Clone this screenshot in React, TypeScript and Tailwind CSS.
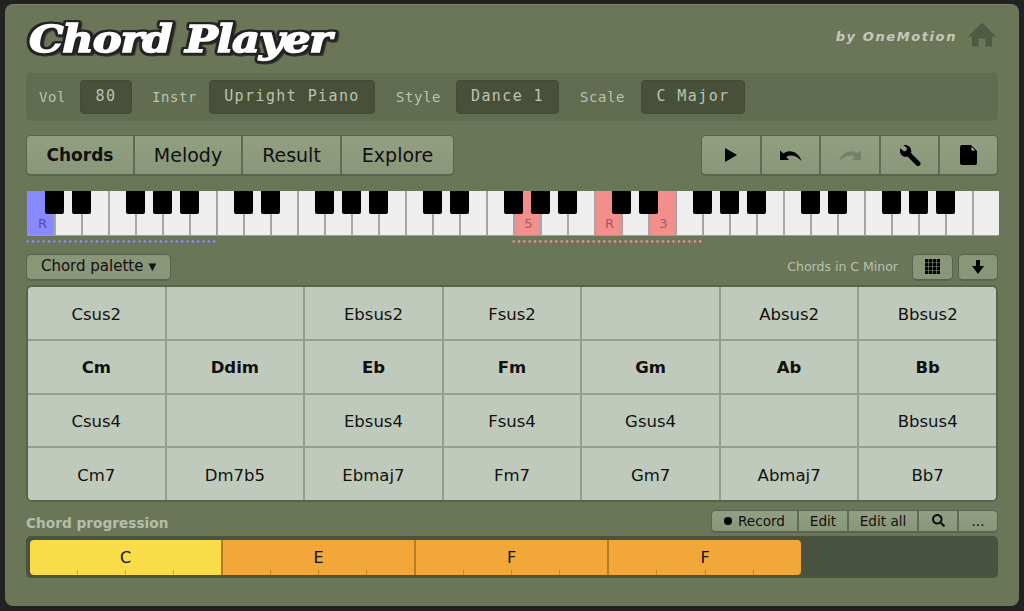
import { FaSearch } from 'react-icons/fa';

const WHITE_COUNT = 36;
const KEY_W = 27;
const BLACK_OFFSETS = [0, 1, 3, 4, 5];

const blackKeys: number[] = [];
for (let oct = 0; oct < 5; oct++) {
  BLACK_OFFSETS.forEach((n) => blackKeys.push(oct * 7 + n));
}

const marks: Record<number, { label: string; color: string; text: string }> = {
  0: { label: 'R', color: 'bg-[#8888ff]', text: 'text-[#4f4fa8]' },
  18: { label: '5', color: 'bg-[#f28e8c]', text: 'text-[#a85a5a]' },
  21: { label: 'R', color: 'bg-[#f28e8c]', text: 'text-[#a85a5a]' },
  23: { label: '3', color: 'bg-[#f28e8c]', text: 'text-[#a85a5a]' },
};

const chordRows = [
  ['Csus2', '', 'Ebsus2', 'Fsus2', '', 'Absus2', 'Bbsus2'],
  ['Cm', 'Ddim', 'Eb', 'Fm', 'Gm', 'Ab', 'Bb'],
  ['Csus4', '', 'Ebsus4', 'Fsus4', 'Gsus4', '', 'Bbsus4'],
  ['Cm7', 'Dm7b5', 'Ebmaj7', 'Fm7', 'Gm7', 'Abmaj7', 'Bb7'],
];

const btn = 'flex items-center justify-center bg-gradient-to-b from-[#939f82] to-[#8a9678] border-r-[2px] border-[#616c55] last:border-r-0';
const label = 'text-[#bcc3ae] text-[14px] tracking-[0.6px]';
const small = 'h-[27px] rounded-[5px] bg-[#8a9678] border border-[#59644e] border-b-[2px] flex items-center justify-center';

function Field({ width, children }: { width: string; children: string }) {
  return (
    <div className={`${width} h-[34px] rounded-[4px] bg-[#495039] border border-[#434a36] flex items-center justify-center text-[#bcc3ae] text-[15px] tracking-[1.4px] pb-[2px]`}>
      {children}
    </div>
  );
}

function Ticks() {
  return (
    <div className="absolute left-0 right-0 bottom-0 h-[5px] flex justify-evenly">
      <span className="w-px h-full bg-black/20" />
      <span className="w-px h-full bg-black/20" />
      <span className="w-px h-full bg-black/20" />
    </div>
  );
}

function GridIcon() {
  return (
    <svg width="15" height="15" viewBox="0 0 15 15" fill="#000">
      {[0, 1, 2, 3].map((r) =>
        [0, 1, 2, 3].map((c) => <rect key={`${r}-${c}`} x={c * 4} y={r * 4} width="3.4" height="3.4" rx="0.5" />)
      )}
    </svg>
  );
}

function DownIcon() {
  return (
    <svg width="12" height="14" viewBox="0 0 12 14" fill="#000">
      <path d="M4 0 H8 V6 H12 L6 14 L0 6 H4 Z" />
    </svg>
  );
}

function HomeIcon() {
  return (
    <svg width="28" height="25" viewBox="0 0 28 24" fill="#505b43" className="-mt-[5px]">
      <path d="M14 0 L28 14 H24 V24 H17.5 V16 H10.5 V24 H4 V14 H0 Z" />
    </svg>
  );
}

function PlayIcon() {
  return (
    <svg width="12" height="14" viewBox="0 0 12 14" fill="#000">
      <path d="M0 0 L12 7 L0 14 Z" />
    </svg>
  );
}

function UndoIcon({ flip, color }: { flip?: boolean; color: string }) {
  return (
    <svg width="22" height="11" viewBox="0 0 22 11" fill={color} className={flip ? '-scale-x-100' : ''}>
      <path d="M0 0.5 L0 10 L9 10 L6.2 7 C10 4.5 16 5 21.5 11 C19.5 3 10 -2 3.5 3.5 Z" />
    </svg>
  );
}

function WrenchIcon() {
  return (
    <svg width="22" height="21" viewBox="0 0 21 21" fill="#000">
      <path d="M0.8 3.2 L4.5 6.5 L7 5.5 L7.5 3 L4 0.3 C8 -0.8 13 2.5 11.5 8 L20.5 17 A2.5 2.5 0 0 1 17 20.5 L8 11.5 C3 13 -0.8 8 0.8 3.2 Z" />
    </svg>
  );
}

function FileIcon() {
  return (
    <svg width="17" height="20" viewBox="0 0 17 20">
      <path fill="#000" d="M2 0 H11 L17 6 V18 A2 2 0 0 1 15 20 H2 A2 2 0 0 1 0 18 V2 A2 2 0 0 1 2 0 Z" />
      <path fill="#aab59a" d="M11.5 1.8 V5.5 H15.2 Z" />
    </svg>
  );
}

export default function App() {
  return (
    <div className="w-[1024px] h-[611px] bg-[#222222] pt-[4px] pl-[5px] overflow-hidden font-['DejaVu_Sans',sans-serif]">
      <div className="w-[1014px] h-[602px] rounded-[8px] bg-[#6b7659] border-t border-[#78836a] px-[21px]">
        {/* header */}
        <div className="h-[68px] flex items-center justify-between">
          <div className="ml-[3px] mt-[-1px] origin-left scale-x-[1.14] font-['DejaVu_Serif',serif] font-bold italic text-[38px] leading-none tracking-[-1px] text-white [-webkit-text-stroke:1.5px_white] [filter:drop-shadow(2px_0_0_#222222)_drop-shadow(-2px_0_0_#222222)_drop-shadow(0_2px_0_#222222)_drop-shadow(0_-2px_0_#222222)_drop-shadow(1px_1px_0_#333b2a)]">
            Chord Player
          </div>
          <div className="flex items-center gap-[11px] -mt-[4px] pr-[2px]">
            <span className="font-bold italic text-[13px] tracking-[1.6px] text-[#c4c9ba]">by OneMotion</span>
            <HomeIcon />
          </div>
        </div>

        {/* settings */}
        <div className="h-[48px] rounded-[5px] bg-[#616c51] pl-[13px] flex items-center font-['DejaVu_Sans_Mono',monospace]">
          <span className={`${label} w-[41px]`}>Vol</span>
          <Field width="w-[52px]">80</Field>
          <span className={`${label} ml-[20px] w-[57px]`}>Instr</span>
          <Field width="w-[166px]">Upright Piano</Field>
          <span className={`${label} ml-[21px] w-[60px]`}>Style</span>
          <Field width="w-[103px]">Dance 1</Field>
          <span className={`${label} ml-[21px] w-[61px]`}>Scale</span>
          <Field width="w-[104px]">C Major</Field>
        </div>

        {/* tabs + transport */}
        <div className="mt-[14px] h-[41px] flex justify-between">
          <div className="flex rounded-[5px] overflow-hidden border border-[#59644e] border-b-[2px] text-[19px] text-[#111]">
            <div className={`${btn} w-[108px] pt-[1px] font-bold text-[17px] from-[#7f8c6d] to-[#7a8769]`}>Chords</div>
            <div className={`${btn} w-[108px] pt-[1px]`}>Melody</div>
            <div className={`${btn} w-[99px] pt-[1px]`}>Result</div>
            <div className={`${btn} w-[111px] pt-[1px]`}>Explore</div>
          </div>
          <div className="flex rounded-[5px] overflow-hidden border border-[#59644e] border-b-[2px]">
            <div className={`${btn} w-[60px]`}><PlayIcon /></div>
            <div className={`${btn} w-[59px]`}><UndoIcon color="#000" /></div>
            <div className={`${btn} w-[60px]`}><UndoIcon flip color="#737f66" /></div>
            <div className={`${btn} w-[59px]`}><WrenchIcon /></div>
            <div className={`${btn} w-[57px]`}><FileIcon /></div>
          </div>
        </div>

        {/* piano */}
        <div className="relative mt-[15px] ml-[1px] w-[972px] h-[45px] flex bg-[#eeeeee] rounded-b-[2px] overflow-hidden border-b border-[#9c9c9c]">
          {Array.from({ length: WHITE_COUNT }, (_, i) => (
            <div key={i} className={`relative w-[27px] h-full border-l-[2px] border-[#a6a6a6] first:border-l-transparent flex items-end justify-center pl-[2px] pb-[2px] text-[13px] ${marks[i] ? marks[i].color : 'bg-[#eeeeee]'} ${marks[i] ? marks[i].text : ''}`}>
              {marks[i]?.label}
            </div>
          ))}
          {blackKeys.map((k) => (
            <div key={k} className="absolute top-0 w-[19px] h-[23px] bg-black rounded-b-[2px]" style={{ left: (k + 1) * KEY_W - 9 }} />
          ))}
        </div>

        {/* range markers */}
        <div className="h-[3px] mt-[4px] flex">
          <div className="w-[191px] h-[3px] -ml-[1px] bg-[radial-gradient(circle,#8888ff_1px,transparent_1.6px)] bg-[length:5.33px_3px]" />
          <div className="w-[191px] h-[3px] ml-[295px] bg-[radial-gradient(circle,#f28e8c_1px,transparent_1.6px)] bg-[length:5.33px_3px]" />
        </div>

        {/* palette header */}
        <div className="mt-[10px] h-[28px] flex items-center justify-between">
          <div className={`${small} w-[145px] text-[15px] text-[#111]`}>
            Chord palette <span className="ml-[5px] text-[10px]">▼</span>
          </div>
          <div className="flex items-center">
            <span className="text-[12.5px] text-[#b9c1ad] mr-[14px]">Chords in C Minor</span>
            <div className={`${small} w-[41px]`}><GridIcon /></div>
            <div className={`${small} w-[40px] ml-[5px]`}><DownIcon /></div>
          </div>
        </div>

        {/* chord grid */}
        <div className="mt-[4px] grid grid-cols-7 grid-rows-4 h-[217px] rounded-[6px] overflow-hidden border-[2px] border-[#59644e] bg-[#949e93] gap-[2px]">
          {chordRows.map((row, r) =>
            row.map((name, c) => (
              <div key={`${r}-${c}`} className={`bg-[#c0cabc] flex items-center justify-center pt-[4px] text-[16.5px] text-[#111] ${r === 1 ? 'font-bold' : ''}`}>
                {name}
              </div>
            ))
          )}
        </div>

        {/* progression header */}
        <div className="mt-[8px] h-[22px] flex items-center justify-between">
          <span className="mt-[5px] font-bold text-[13.7px] text-[#b5bdaa]">Chord progression</span>
          <div className="flex h-[23px] rounded-[5px] overflow-hidden border border-[#59644e] border-b-[2px] text-[13.6px] text-[#111]">
            <div className={`${btn} w-[87px] pt-[1px]`}><span className="w-[8px] h-[8px] rounded-full bg-black mr-[6px]" />Record</div>
            <div className={`${btn} w-[50px] pt-[1px]`}>Edit</div>
            <div className={`${btn} w-[70px] pt-[1px]`}>Edit all</div>
            <div className={`${btn} w-[40px]`}><FaSearch className="text-[13px]" /></div>
            <div className={`${btn} w-[38px] pt-[1px]`}>...</div>
          </div>
        </div>

        {/* progression track */}
        <div className="mt-[4px] h-[42px] rounded-[5px] bg-[#4a5240] pl-[4px] pt-[4px] flex text-[16px] text-[#111]">
          <div className="relative w-[191px] h-[35px] pt-[1px] bg-[#fadc4b] rounded-l-[4px] flex items-center justify-center">C<Ticks /></div>
          <div className="relative w-[193px] h-[35px] pt-[1px] bg-[#f1a838] border-l-[2px] border-[#b57d28] flex items-center justify-center">E<Ticks /></div>
          <div className="relative w-[193px] h-[35px] pt-[1px] bg-[#f1a838] border-l-[2px] border-[#b57d28] flex items-center justify-center">F<Ticks /></div>
          <div className="relative w-[194px] h-[35px] pt-[1px] bg-[#f1a838] border-l-[2px] border-[#b57d28] rounded-r-[4px] flex items-center justify-center">F<Ticks /></div>
        </div>
      </div>
    </div>
  );
}
